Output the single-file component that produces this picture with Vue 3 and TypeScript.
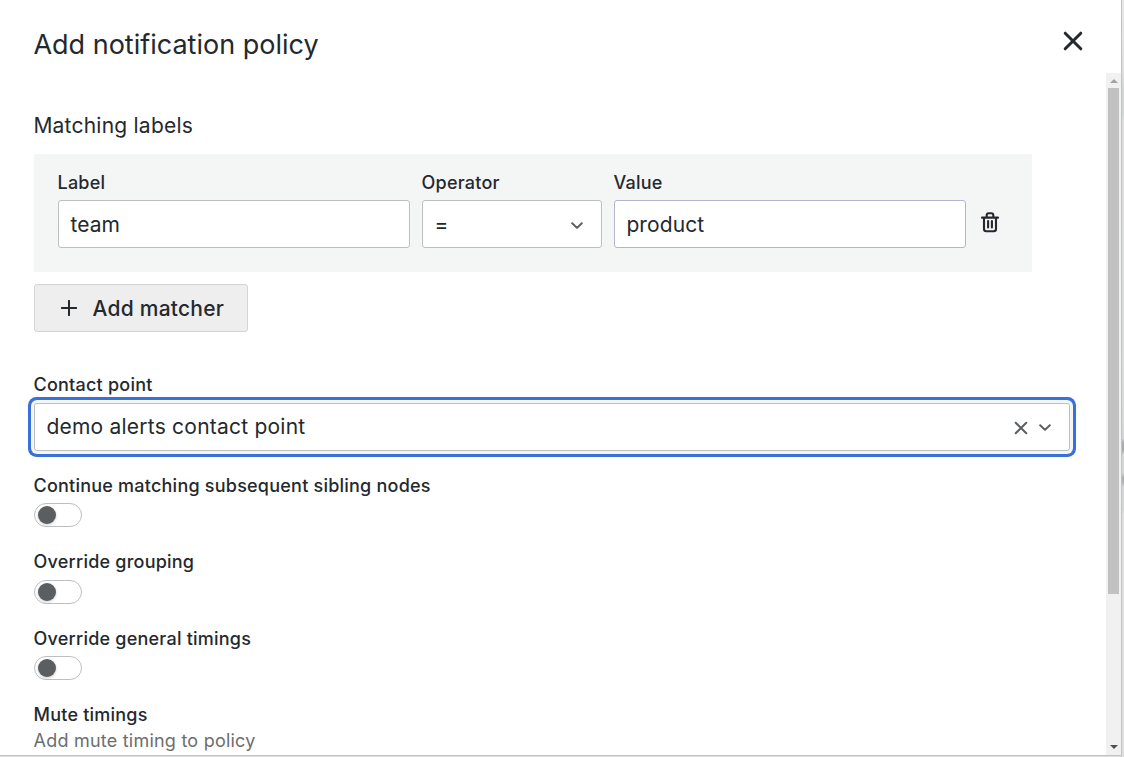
<script setup lang="ts">
import { ref } from 'vue'

interface Toggle {
  id: string
  label: string
}

const label = ref('team')
const value = ref('product')
const toggles: Toggle[] = [
  { id: 'continue', label: 'Continue matching subsequent sibling nodes' },
  { id: 'grouping', label: 'Override grouping' },
  { id: 'timings', label: 'Override general timings' },
]
</script>

<template>
  <div class="backdrop">
    <section class="modal">
      <header class="header">
        <h1 class="title">Add notification policy</h1>
        <button class="icon-button close" aria-label="Close">
          <svg width="20" height="20" viewBox="0 0 20 20"><path d="M2.2 2.2 17.8 17.8M17.8 2.2 2.2 17.8" /></svg>
        </button>
      </header>
      <div class="body">
        <div class="content">
          <h2 class="subtitle">Matching labels</h2>
          <div class="matchers">
            <div class="field wide">
              <label class="label">Label</label>
              <div class="control input"><span class="text">{{ label }}</span></div>
            </div>
            <div class="field narrow">
              <label class="label">Operator</label>
              <div class="control select">
                <span class="operator">=</span>
                <svg class="chevron" width="12" height="8" viewBox="0 0 12 8"><path d="M1.2 1.3 6 5.9 10.8 1.3" /></svg>
              </div>
            </div>
            <div class="field wide">
              <label class="label">Value</label>
              <div class="control input lilac"><span class="text">{{ value }}</span></div>
            </div>
            <button class="icon-button trash" aria-label="Remove">
              <svg width="18" height="21" viewBox="0 0 18 21">
                <path d="M.9 5.6H17.1M5.7 5.4V3.2Q5.7 1.2 7.7 1.2H10.3Q12.3 1.2 12.3 3.2V5.4M3 5.6V17Q3 19.2 5.2 19.2H12.8Q15 19.2 15 17V5.6M7.1 9V15.5M10.9 9V15.5" />
              </svg>
            </button>
          </div>
          <button class="add">
            <svg width="16" height="16" viewBox="0 0 16 16"><path d="M8 .8V15.2M.8 8H15.2" /></svg>
            <span>Add matcher</span>
          </button>
          <label class="label contact-label">Contact point</label>
          <div class="control select contact">
            <span class="text">demo alerts contact point</span>
            <svg class="clear" width="14" height="14" viewBox="0 0 14 14"><path d="M1.7 1.7 12.3 12.3M12.3 1.7 1.7 12.3" /></svg>
            <svg class="chevron" width="12" height="8" viewBox="0 0 12 8"><path d="M1.2 1.3 6 5.9 10.8 1.3" /></svg>
          </div>
          <div class="toggles">
            <div v-for="t in toggles" :key="t.id" class="toggle-row">
              <label class="label">{{ t.label }}</label>
              <div class="switch"><span class="knob"></span></div>
            </div>
          </div>
          <div class="label mute">Mute timings</div>
          <div class="description">Add mute timing to policy</div>
        </div>
        <div class="scrollbar">
          <svg class="arrow up" width="8" height="4" viewBox="0 0 8 4"><path d="M0 4 4 0 8 4Z" /></svg>
          <div class="thumb"></div>
          <svg class="arrow down" width="8" height="4" viewBox="0 0 8 4"><path d="M0 0H8L4 4Z" /></svg>
        </div>
      </div>
    </section>
  </div>
</template>

<style>
body {
  margin: 0;
  overflow: hidden;
}
</style>

<style scoped>
* {
  box-sizing: border-box;
}
.backdrop {
  width: 1124px;
  height: 757px;
  overflow: hidden;
  background: linear-gradient(
    #e8e8e8 0,
    #e0e0e0 70px,
    #d3d4d4 90px,
    #d3d4d4 114px,
    #dcdcdd 120px,
    #dadbdb 360px,
    #d5d6d6 438px,
    #a9acac 443px,
    #a9acac 450px,
    #d5d6d6 455px,
    #d5d6d6 473px,
    #a9acac 478px,
    #b5b8b8 483px,
    #d5d6d6 487px,
    #d5d6d6 510px,
    #dededf 514px,
    #dededf 757px
  );
  font-family: Inter, "Liberation Sans", sans-serif;
  color: #24292e;
}
.modal {
  width: 1121px;
  height: 755px;
  display: flex;
  flex-direction: column;
  background: #fff;
  box-shadow: 0 0 0 1px #c2c3c4;
}
.header {
  height: 73px;
  flex: none;
  display: flex;
  justify-content: space-between;
  padding: 28px 38px 0 34px;
}
.title {
  margin: 0;
  font-size: 27px;
  line-height: 33px;
  font-weight: 400;
  text-indent: -0.6px;
}
.icon-button {
  border: 0;
  padding: 0;
  background: none;
  display: block;
}
.close {
  height: 20px;
  margin-top: 3px;
}
svg {
  display: block;
  flex: none;
  fill: none;
  stroke: #24292e;
  stroke-linecap: round;
  stroke-linejoin: round;
}
.close svg {
  stroke-width: 3;
}
.body {
  flex: 1;
  min-height: 0;
  display: flex;
  justify-content: space-between;
}
.content {
  width: 1036px;
  margin-left: 34px;
  padding-top: 40px;
}
.subtitle {
  margin: 0 0 15px;
  font-size: 21px;
  line-height: 26px;
  font-weight: 400;
  letter-spacing: 0.225px;
  text-indent: -0.6px;
}
.matchers {
  width: 998px;
  height: 118px;
  padding: 18px 24px 0;
  display: flex;
  gap: 12px;
  background: #f4f5f5;
}
.wide {
  width: 352px;
}
.narrow {
  width: 180px;
}
.label {
  display: block;
  height: 22px;
  font-size: 18px;
  line-height: 22px;
  font-weight: 500;
  letter-spacing: 0.225px;
  text-indent: -0.5px;
}
.field .label {
  margin-bottom: 6px;
}
.control {
  height: 48px;
  display: flex;
  align-items: center;
  padding: 0 12px 0 11.4px;
  border: 1px solid #bdbebf;
  border-radius: 3px;
  background: #fff;
  font-size: 21px;
  letter-spacing: 0.225px;
}
.input {
  letter-spacing: 0.1px;
}
.lilac {
  border-color: #b8b3cc;
}
.select {
  padding-right: 18px;
}
.operator {
  margin: 2px auto 0 0;
  font-size: 21px;
  line-height: 24px;
}
.chevron,
.clear {
  stroke: #5b5e62;
  stroke-width: 2;
  margin-top: 3px;
}
.trash {
  margin: 40px 0 0 3px;
  height: 21px;
}
.trash svg {
  stroke-width: 2.1;
}
.add {
  width: 214px;
  height: 48px;
  margin-top: 12px;
  padding: 0 0 0 26px;
  display: flex;
  align-items: center;
  gap: 15.6px;
  border: 1px solid #d3d4d5;
  border-radius: 3px;
  background: #eee;
  font-family: inherit;
  font-size: 21px;
  font-weight: 500;
  letter-spacing: 0.225px;
  color: #24292e;
}
.add svg {
  stroke-width: 2;
}
.contact-label {
  margin-top: 42px;
}
.contact {
  margin-top: 7px;
  padding-bottom: 2px;
  box-shadow: 0 0 0 3px #f4f5f5, 0 0 0 6px #3871dc;
}
.contact .text {
  flex: 1;
}
.clear {
  margin-right: 11px;
}
.toggles {
  margin-top: 24px;
}
.toggle-row {
  height: 76.4px;
}
.switch {
  width: 48px;
  height: 24px;
  margin-top: 6.2px;
  padding: 2px;
  border: 1px solid #bdbebf;
  border-radius: 12px;
}
.knob {
  display: block;
  width: 18px;
  height: 18px;
  margin-left: 1px;
  border-radius: 50%;
  background: #5b5e61;
  box-shadow: 0 1px 3px #0003;
}
.description {
  margin-top: 4px;
  font-size: 18px;
  line-height: 22px;
  letter-spacing: 0.225px;
  text-indent: -0.5px;
  color: #6b6e71;
}
.scrollbar {
  width: 15px;
  display: flex;
  flex-direction: column;
  align-items: center;
  background: #f1f1f1;
}
.thumb {
  width: 11px;
  height: 506px;
  background: #c1c1c1;
}
.arrow {
  stroke: none;
}
.up {
  margin: 6px 0 5px;
  fill: #a3a3a3;
}
.down {
  margin: auto 0 6px;
  fill: #505050;
}
</style>
